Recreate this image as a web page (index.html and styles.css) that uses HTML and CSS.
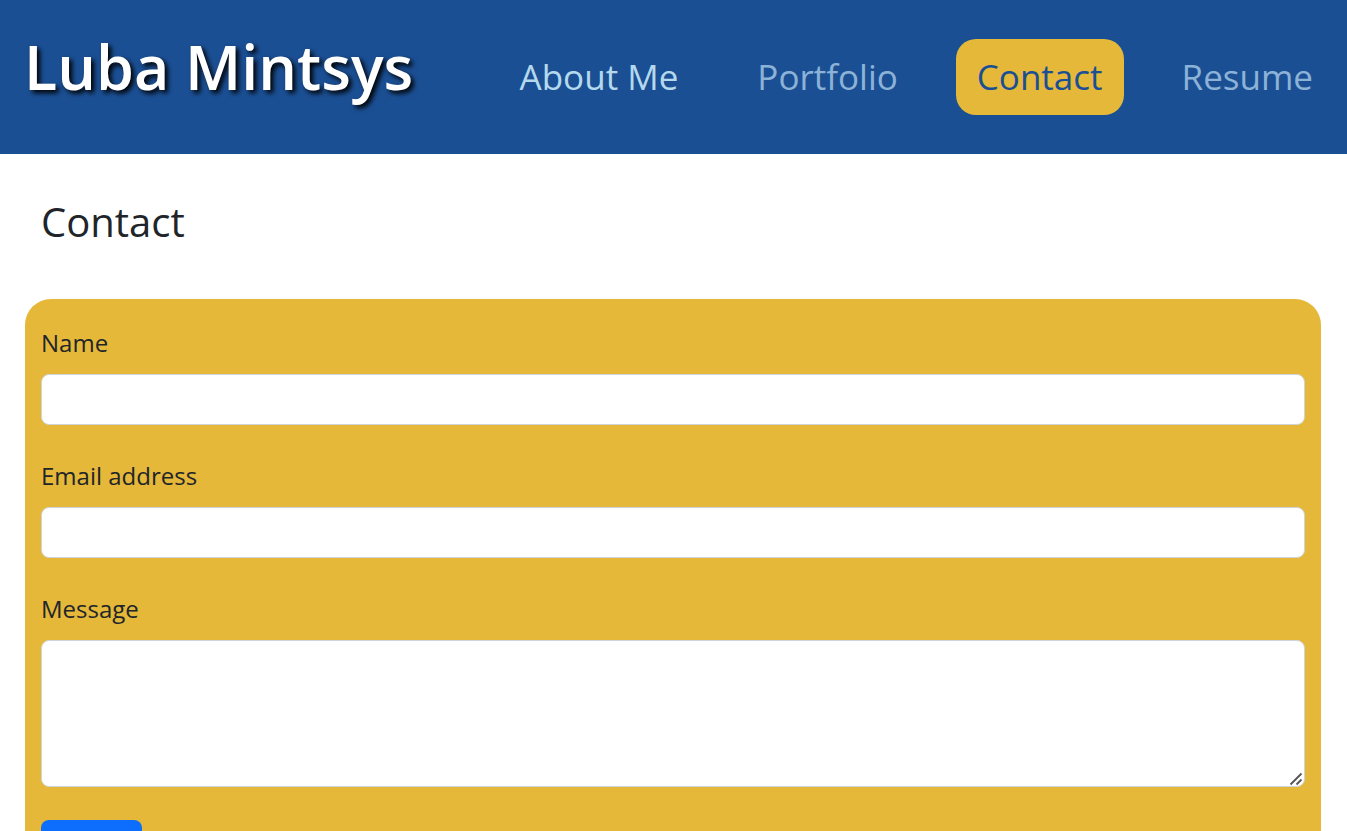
FILE: index.html
```html
<!DOCTYPE html>
<html lang="en">
<head>
<meta charset="utf-8">
<meta name="viewport" content="width=device-width, initial-scale=1">
<title>Luba Mintsys</title>
<link rel="stylesheet" href="styles.css">
</head>
<body>
<header class="site-header">
  <h1 class="site-name">Luba Mintsys</h1>
  <nav class="site-nav">
    <a class="nav-link nav-link-bright" href="#about">About Me</a>
    <a class="nav-link" href="#portfolio">Portfolio</a>
    <a class="nav-link nav-link-active" href="#contact" aria-current="page">Contact</a>
    <a class="nav-link" href="#resume">Resume</a>
  </nav>
</header>
<main class="page">
  <h2 class="page-title">Contact</h2>
  <form class="contact-form">
    <div class="field">
      <label class="field-label" for="name">Name</label>
      <input class="field-control" id="name" type="text">
    </div>
    <div class="field">
      <label class="field-label" for="email">Email address</label>
      <input class="field-control" id="email" type="email">
    </div>
    <div class="field">
      <label class="field-label" for="message">Message</label>
      <div class="message-box">
        <textarea class="field-control field-message" id="message" rows="3"></textarea>
        <svg class="message-grip" viewBox="0 0 14 14" aria-hidden="true">
          <path d="M1.5 12.5 12.5 1.5M7.5 12.5 12.5 7.5" fill="none" stroke="#555" stroke-width="1.8"/>
        </svg>
      </div>
    </div>
    <button class="submit-button" type="submit">Submit</button>
  </form>
</main>
</body>
</html>
```
FILE: styles.css
```css
* {
  box-sizing: border-box;
}

body {
  margin: 0;
  background: #fff;
  color: #212529;
  font-family: "Trebuchet MS", "Open Sans", sans-serif;
  font-size: 24px;
  line-height: 36px;
}

.site-header {
  display: flex;
  align-items: flex-start;
  justify-content: space-between;
  padding: 27px 13px 39px 24px;
  background: #1b4f94;
}

.site-name {
  margin: 0;
  color: #fff;
  font-size: 61px;
  font-weight: 600;
  line-height: 80px;
  white-space: nowrap;
  text-shadow: 3px 3px 5px #000;
}

.site-nav {
  display: flex;
  gap: 37px;
  padding-top: 12px;
}

.nav-link {
  padding: 10px 21px;
  border-radius: 20px;
  color: #8cb3d7;
  font-size: 35px;
  line-height: 56px;
  text-decoration: none;
  white-space: nowrap;
}

.nav-link-bright {
  color: #b4d9ed;
}

.nav-link-active {
  background: #e5b839;
  color: #1b4f94;
}

.page {
  padding: 44px 26px 24px 25px;
}

.page-title {
  margin: 0 16px 53px;
  font-size: 40px;
  font-weight: 400;
  line-height: 48px;
}

.contact-form {
  padding: 26px 16px;
  border-radius: 26px;
  background: #e5b839;
}

.field {
  display: flex;
  flex-direction: column;
  gap: 13px;
  margin-bottom: 33px;
}

.field-control {
  display: block;
  width: 100%;
  height: 51px;
  padding: 8px 16px;
  border: 1px solid #ced4da;
  border-radius: 8px;
  background: #fff;
  color: inherit;
  font: inherit;
}

.message-box {
  position: relative;
}

.field-message {
  height: 147px;
  resize: none;
}

.message-grip {
  position: absolute;
  right: 2px;
  bottom: 1px;
  width: 14px;
  height: 14px;
  pointer-events: none;
}

.submit-button {
  padding: 16px 11px;
  border: 0;
  border-radius: 8px;
  background: #0d6efd;
  color: #fff;
  font: inherit;
  cursor: pointer;
}
```
